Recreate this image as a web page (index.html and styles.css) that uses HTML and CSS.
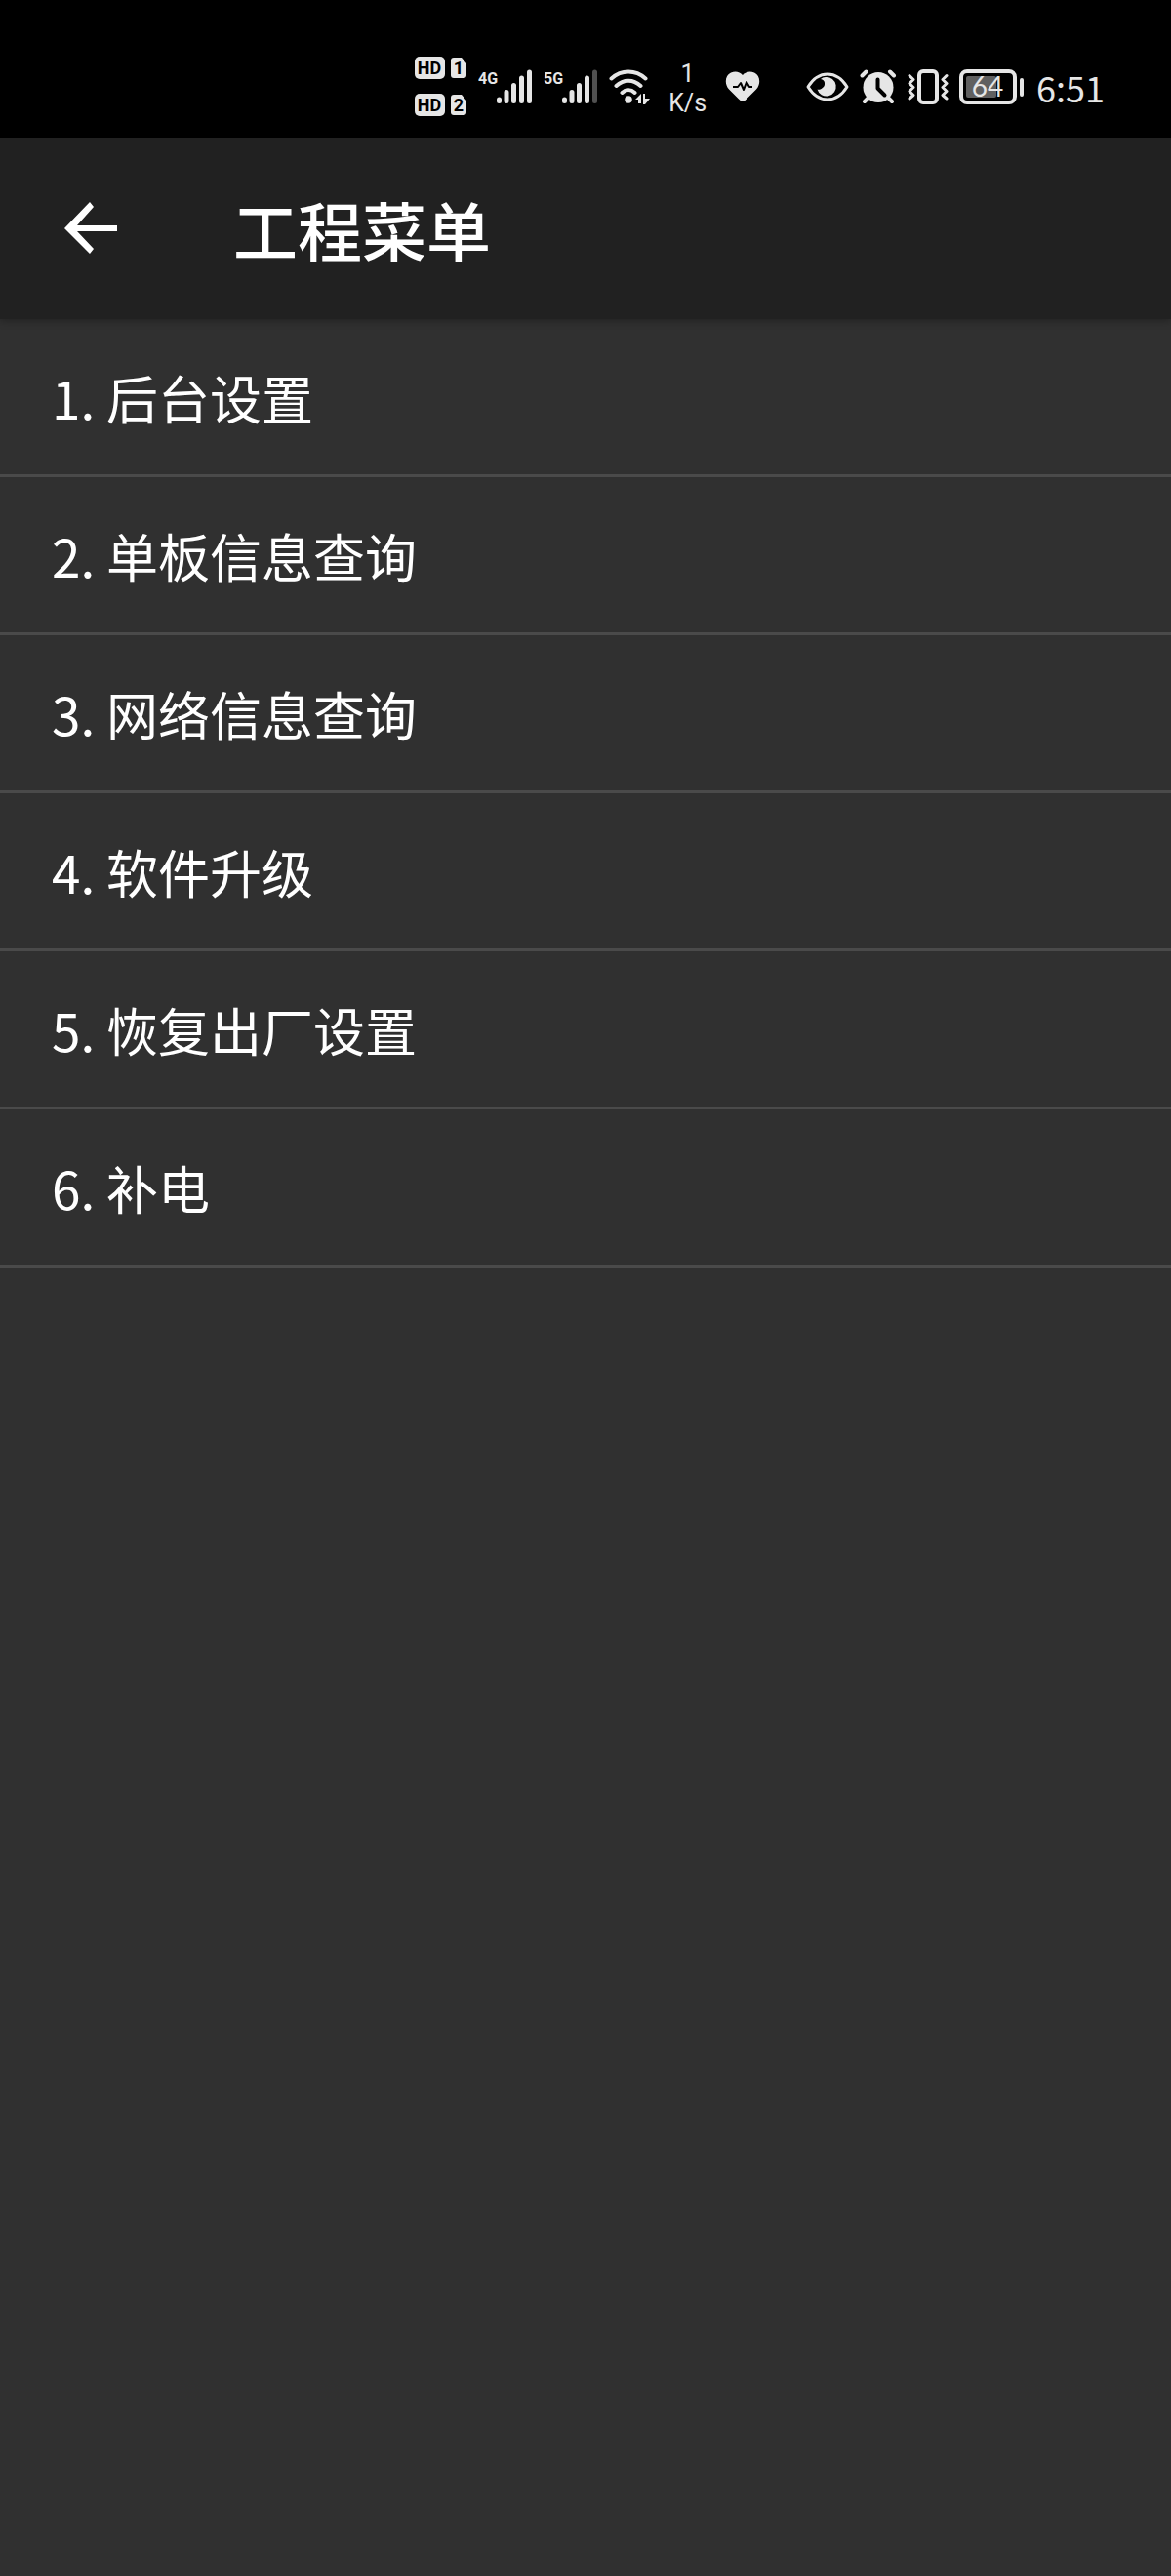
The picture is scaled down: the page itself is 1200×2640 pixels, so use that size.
FILE: index.html
```html
<!DOCTYPE html>
<html lang="zh-CN">
<head>
<meta charset="utf-8">
<meta name="viewport" content="width=device-width, initial-scale=1">
<title>工程菜单</title>
<link rel="stylesheet" href="styles.css">
</head>
<body>
<div class="status-bar">
  <svg class="icon hd" width="54" height="62" viewBox="0 0 54 62" aria-label="HD 1, HD 2">
    <rect x="0" y="0" width="31" height="23" rx="5"/>
    <rect x="0" y="38" width="31" height="23" rx="5"/>
    <path d="M40 1h8l5 6v12a3 3 0 0 1-3 3H40a3 3 0 0 1-3-3V4a3 3 0 0 1 3-3z"/>
    <path d="M40 39h8l5 6v12a3 3 0 0 1-3 3H40a3 3 0 0 1-3-3V42a3 3 0 0 1 3-3z"/>
    <text class="chip" x="15" y="18">HD</text>
    <text class="chip" x="15" y="56">HD</text>
    <text class="chip" x="45" y="18">1</text>
    <text class="chip" x="45" y="56">2</text>
  </svg>
  <svg class="icon signal" width="56" height="36" viewBox="0 0 56 36" aria-label="4G">
    <text class="net" x="0" y="15">4G</text>
    <path class="bar" d="M21.500 31v1.500M29 23.500v9M36.500 16.500v16M44.500 9v23.500M52.500 3v29.500"/>
  </svg>
  <svg class="icon signal" width="56" height="36" viewBox="0 0 56 36" aria-label="5G">
    <text class="net" x="0" y="15">5G</text>
    <path class="bar" d="M21.500 31v1.500M29 23.500v9M36.500 16.500v16M44.500 9v23.500"/>
    <path class="bar dim" d="M52.500 3v29.500"/>
  </svg>
  <svg class="icon wifi" width="42" height="36" viewBox="0 0 42 36" aria-label="Wi-Fi">
    <path class="arc" d="M2.500 9.500C13 .3 27 .3 37.500 9.500M7.500 17C15 10 25 10 32.500 17M13.500 24C17.500 20.300 22.500 20.300 26.500 24"/>
    <circle cx="20" cy="31" r="3.800"/>
    <path d="M27 31l6-6v10h-3v-4zM35 25h2v5h5l-5 6h-2z"/>
  </svg>
  <div class="speed"><span>1</span><span>K/s</span></div>
  <svg class="icon heart" width="36" height="34" viewBox="0 0 36 34" aria-label="健康">
    <path d="M18 32Q16.500 32 14 29.500L4 19.500C-1 14 0 5 6 2.500c4.500-2 9-1 12 2.500 3-3.500 7.500-4.500 12-2.500 6 2.500 7 11.500 2 17L22 29.500Q19.500 32 18 32z"/>
    <path class="cut" d="M8 17h5l3-4 3 7 3-8 3 5h3"/>
  </svg>
  <svg class="icon eye" width="44" height="32" viewBox="0 0 44 32" aria-label="护眼">
    <path class="line" d="M2 16C7 8 14 3 22 3s15 5 20 13C37 24 30 29 22 29S7 24 2 16z"/>
    <path d="M20 6a9.800 9.800 0 1 1-8.500 12.500c2 1 7-1 7.500-5s-2-5-4-5.500c1.500-1.300 3-2 5-2z"/>
  </svg>
  <svg class="icon alarm" width="38" height="36" viewBox="0 0 38 36" aria-label="闹钟">
    <circle cx="19" cy="18.500" r="15.500"/>
    <path class="knob" d="M2.500 6.500L6.500 2.500M31 2.500L35 6.500M5 33l5-5M33 33l-5-5"/>
    <path class="hand" d="M18.500 10.500v9l7 7"/>
  </svg>
  <svg class="icon vibrate" width="42" height="36" viewBox="0 0 42 36" aria-label="振动">
    <rect class="phone" x="12" y="2" width="18" height="32" rx="4"/>
    <path class="wave" d="M2 6.500l4 4-4 4 4 4-4 4 4 4-4 3.500M40 6.500l-4 4 4 4-4 4 4 4-4 4 4 3.500"/>
  </svg>
  <svg class="icon battery" width="68" height="36" viewBox="0 0 68 36" aria-label="64%">
    <rect class="shell" x="2" y="2" width="55" height="32" rx="6"/>
    <rect class="charge" x="7" y="7" width="31" height="22" rx="2"/>
    <rect x="62" y="9" width="4" height="19" rx="2"/>
    <text class="level" x="29" y="28">64</text>
  </svg>
  <time class="clock">6:51</time>
</div>
<header class="app-bar">
  <button class="back" type="button" aria-label="返回">
    <svg width="54" height="54" viewBox="0 0 54 54"><path d="M54 24v6H13l17 18-4 5L0 27 26 0l4 5-17 19z"/></svg>
  </button>
  <h1>工程菜单</h1>
</header>
<nav class="menu">
  <a href="#background">1. 后台设置</a>
  <a href="#board">2. 单板信息查询</a>
  <a href="#network">3. 网络信息查询</a>
  <a href="#upgrade">4. 软件升级</a>
  <a href="#reset">5. 恢复出厂设置</a>
  <a href="#charge">6. 补电</a>
</nav>
</body>
</html>
```
FILE: styles.css
```css
* {
  box-sizing: border-box;
}

body {
  margin: 0;
  min-height: 100vh;
  background: #303030;
  color: #fff;
  font-family: "Noto Sans CJK SC", sans-serif;
}

.status-bar {
  display: flex;
  align-items: center;
  justify-content: flex-end;
  gap: 11px;
  height: 141px;
  padding: 36px 68px 0 0;
  background: #000;
  color: #e6e6e6;
}

.icon {
  flex: none;
  fill: #e6e6e6;
}

.chip {
  fill: #000;
  font: 700 18px Roboto, sans-serif;
  text-anchor: middle;
}

.net {
  font: 700 16px Roboto, sans-serif;
}

.bar,
.arc,
.line,
.knob,
.phone,
.wave,
.shell {
  fill: none;
  stroke: #e6e6e6;
  stroke-width: 4;
  stroke-linecap: round;
  stroke-linejoin: round;
}

.bar {
  stroke-width: 5;
}

.bar.dim {
  stroke: #505050;
}

.wave,
.line {
  stroke-width: 3;
}

.cut,
.hand {
  fill: none;
  stroke: #000;
  stroke-width: 2;
  stroke-linejoin: round;
}

.hand {
  stroke-width: 4;
  stroke-linecap: round;
}

.icon .charge {
  fill: #606060;
}

.level {
  font: 400 28px Lato, sans-serif;
  text-anchor: middle;
}

.speed {
  display: flex;
  flex-direction: column;
  align-items: center;
  padding: 4px 8px 0;
  font: 400 25px/30px Roboto, sans-serif;
}

.eye {
  margin-left: 36px;
}

.clock {
  font-size: 36px;
  line-height: 44px;
}

.app-bar {
  position: relative;
  display: flex;
  align-items: center;
  gap: 119px;
  height: 186px;
  padding: 0 66px;
  background: #212121;
  box-shadow: 0 2px 8px rgba(0, 0, 0, 0.3);
}

.back {
  display: flex;
  padding: 0;
  border: 0;
  background: none;
  fill: #fff;
}

h1 {
  margin: 0;
  font-size: 66px;
  font-weight: 500;
  line-height: 96px;
}

.menu {
  display: flex;
  flex-direction: column;
}

.menu a {
  height: 162px;
  padding: 0 53px;
  border-bottom: 3px solid #4a4a4a;
  color: #fff;
  font-size: 53px;
  line-height: 160px;
  text-decoration: none;
}
```
